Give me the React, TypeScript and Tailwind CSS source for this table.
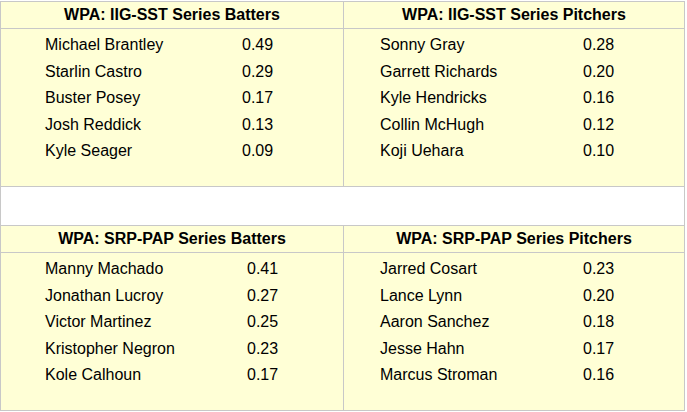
type Row = [string, string];

interface PanelProps {
  title: string;
  rows: Row[];
  padLeft: string;
  nameWidth: string;
  divider?: boolean;
}

const iigBatters: Row[] = [
  ["Michael Brantley", "0.49"],
  ["Starlin Castro", "0.29"],
  ["Buster Posey", "0.17"],
  ["Josh Reddick", "0.13"],
  ["Kyle Seager", "0.09"],
];

const iigPitchers: Row[] = [
  ["Sonny Gray", "0.28"],
  ["Garrett Richards", "0.20"],
  ["Kyle Hendricks", "0.16"],
  ["Collin McHugh", "0.12"],
  ["Koji Uehara", "0.10"],
];

const srpBatters: Row[] = [
  ["Manny Machado", "0.41"],
  ["Jonathan Lucroy", "0.27"],
  ["Victor Martinez", "0.25"],
  ["Kristopher Negron", "0.23"],
  ["Kole Calhoun", "0.17"],
];

const srpPitchers: Row[] = [
  ["Jarred Cosart", "0.23"],
  ["Lance Lynn", "0.20"],
  ["Aaron Sanchez", "0.18"],
  ["Jesse Hahn", "0.17"],
  ["Marcus Stroman", "0.16"],
];

function Panel({ title, rows, padLeft, nameWidth, divider }: PanelProps) {
  return (
    <div
      className={`flex flex-col bg-[#ffffd6] ${
        divider ? "w-[343px] border-r border-[#c8c8c8]" : "flex-1"
      }`}
    >
      <div className="h-[27px] border-b border-[#c8c8c8] flex items-center justify-center font-bold text-[16px] leading-none">
        {title}
      </div>
      <div className={`pt-[3px] ${padLeft}`}>
        {rows.map(([name, value]) => (
          <div key={name} className="h-[26.5px] flex items-center text-[16px] leading-none">
            <span className={nameWidth}>{name}</span>
            <span>{value}</span>
          </div>
        ))}
      </div>
    </div>
  );
}

export default function App() {
  return (
    <div className="w-[687px] h-[412px] bg-white pt-px text-black font-['Liberation_Sans',Arial,sans-serif]">
      <div className="w-[685px] border border-[#c8c8c8]">
        <div className="h-[185px] flex border-b border-[#c8c8c8]">
          <Panel
            title="WPA: IIG-SST Series Batters"
            rows={iigBatters}
            padLeft="pl-[44px]"
            nameWidth="w-[197px]"
            divider
          />
          <Panel
            title="WPA: IIG-SST Series Pitchers"
            rows={iigPitchers}
            padLeft="pl-[36px]"
            nameWidth="w-[203px]"
          />
        </div>
        <div className="h-[38px] bg-white" />
        <div className="h-[185px] flex border-t border-[#c8c8c8]">
          <Panel
            title="WPA: SRP-PAP Series Batters"
            rows={srpBatters}
            padLeft="pl-[44px]"
            nameWidth="w-[202px]"
            divider
          />
          <Panel
            title="WPA: SRP-PAP Series Pitchers"
            rows={srpPitchers}
            padLeft="pl-[36px]"
            nameWidth="w-[203px]"
          />
        </div>
      </div>
    </div>
  );
}
